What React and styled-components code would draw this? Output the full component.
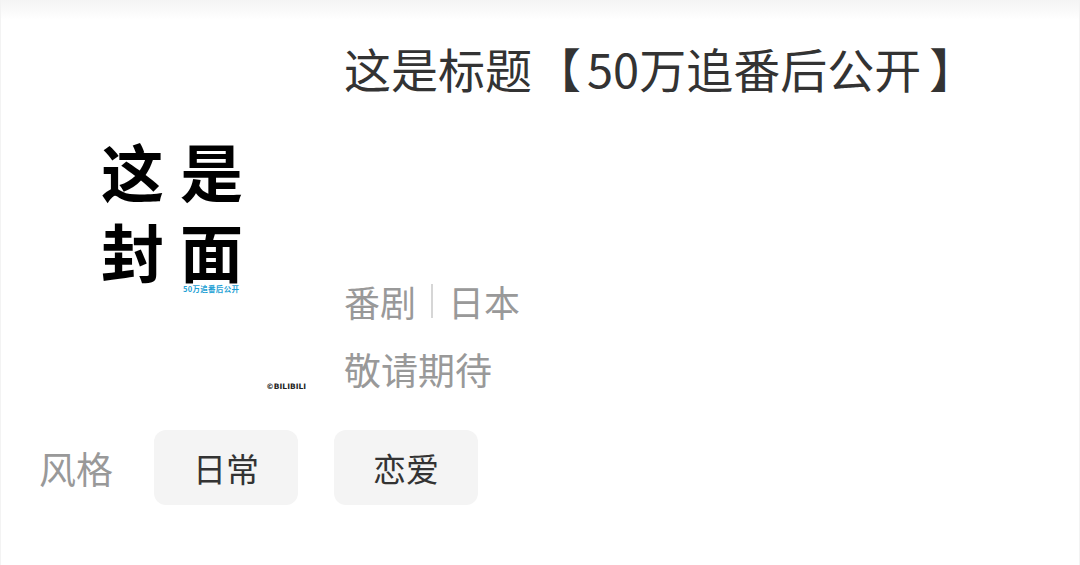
import React from "react";
import styled, { createGlobalStyle } from "styled-components";

const Global = createGlobalStyle`
  html, body { margin: 0; padding: 0; background: #fff; }
  body { font-family: "Noto Sans CJK SC", "Noto Sans", sans-serif; }
`;

const Page = styled.div`
  width: 1080px;
  height: 565px;
  box-sizing: border-box;
  background: linear-gradient(#f4f4f4 0px, #ffffff 20px);
  border-left: 1px solid #f3f3f3;
  border-right: 1px solid #f3f3f3;
  overflow: hidden;
  display: flex;
  flex-direction: column;
`;

const Header = styled.div`
  display: flex;
  padding: 28px 0 0 60px;
`;

const Cover = styled.div`
  position: relative;
  width: 256px;
  height: 370px;
  background: #fff;
  box-sizing: border-box;
  padding: 112px 0 0 40px;
`;

const CoverGrid = styled.div`
  display: grid;
  grid-template-columns: 79px 64px;
  row-gap: 20px;
  font-size: 63px;
  line-height: 60px;
  font-weight: 700;
  color: #000;
`;

const CoverNote = styled.div`
  margin: 4px 0 0 82px;
  font-size: 7.5px;
  line-height: 9px;
  letter-spacing: 0.3px;
  color: #1e9fd4;
  font-weight: 700;
`;

const Watermark = styled.div`
  position: absolute;
  right: 11px;
  bottom: 7px;
  font-family: "DejaVu Sans", sans-serif;
  font-size: 7.5px;
  font-weight: 700;
  color: #222;
`;

const Info = styled.div`
  display: flex;
  flex-direction: column;
  padding-left: 27px;
`;

const Title = styled.h1`
  margin: 12px 0 0;
  font-size: 47px;
  line-height: 56px;
  font-weight: 400;
  color: #333;
  white-space: nowrap;
`;

const Bracket = styled.span`
  margin: ${(p) => (p.$open ? "0 6px 0 2px" : "0 0 0 8px")};
`;

const Meta = styled.div`
  display: flex;
  align-items: center;
  margin-top: 180px;
  font-size: 36px;
  line-height: 50px;
  color: #999;
`;

const Divider = styled.span`
  width: 2px;
  height: 34px;
  background: #d6d6d6;
  margin: 0 15px;
`;

const Status = styled.div`
  margin-top: 18px;
  font-size: 37px;
  line-height: 50px;
  color: #999;
`;

const TagRow = styled.div`
  display: flex;
  align-items: center;
  gap: 36px;
  padding: 32px 0 0 38px;
`;

const TagLabel = styled.span`
  font-size: 37px;
  line-height: 50px;
  color: #999;
  margin-right: 5px;
`;

const Tag = styled.span`
  display: flex;
  align-items: center;
  justify-content: center;
  width: 144px;
  height: 75px;
  border-radius: 12px;
  background: #f4f4f4;
  font-size: 33px;
  color: #333;
`;

export default function App() {
  return (
    <>
      <Global />
      <Page>
        <Header>
          <Cover>
            <CoverGrid>
              <span>这</span>
              <span>是</span>
              <span>封</span>
              <span>面</span>
            </CoverGrid>
            <CoverNote>50万追番后公开</CoverNote>
            <Watermark>©BILIBILI</Watermark>
          </Cover>
          <Info>
            <Title>
              这是标题<Bracket $open>【</Bracket>50万追番后公开<Bracket>】</Bracket>
            </Title>
            <Meta>
              <span>番剧</span>
              <Divider />
              <span>日本</span>
            </Meta>
            <Status>敬请期待</Status>
          </Info>
        </Header>
        <TagRow>
          <TagLabel>风格</TagLabel>
          <Tag>日常</Tag>
          <Tag>恋爱</Tag>
        </TagRow>
      </Page>
    </>
  );
}
